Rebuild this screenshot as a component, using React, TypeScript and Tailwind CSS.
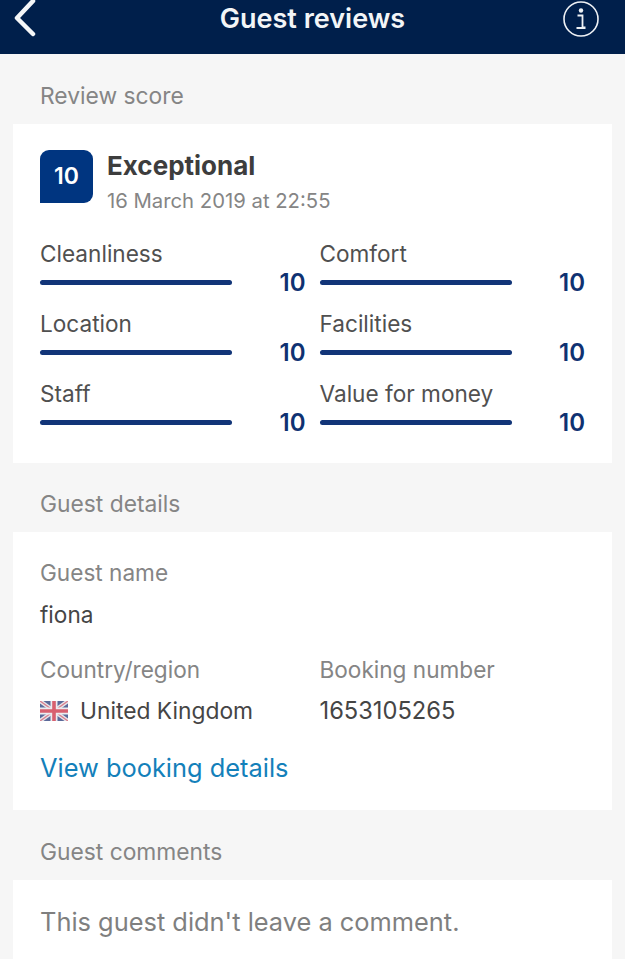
const scores = [
  { label: "Cleanliness", value: 10 },
  { label: "Comfort", value: 10 },
  { label: "Location", value: 10 },
  { label: "Facilities", value: 10 },
  { label: "Staff", value: 10 },
  { label: "Value for money", value: 10 },
];

function SectionLabel({ text }: { text: string }) {
  return <div className="h-[28px] mx-[40px] mb-[14px] text-[22.800px] leading-[28px] text-[#858585]">{text}</div>;
}

function UkFlag() {
  return (
    <svg width="28" height="20" viewBox="0 0 28 20" className="shrink-0">
      <rect width="28" height="20" fill="#5b6a9a" />
      <path d="M0 0L28 20M28 0L0 20" stroke="#e8e6ea" strokeWidth="4" />
      <path d="M0 0L28 20M28 0L0 20" stroke="#d9808f" strokeWidth="1.4" />
      <path d="M14 0V20M0 10H28" stroke="#ececf0" strokeWidth="7" />
      <path d="M14 0V20M0 10H28" stroke="#d8606f" strokeWidth="3.6" />
    </svg>
  );
}

export default function App() {
  return (
    <div className="h-[959px] w-[625px] overflow-hidden bg-[#f6f6f6] font-['Inter','Liberation_Sans',sans-serif] antialiased">
      <header className="grid h-[54px] grid-cols-[1fr_auto_1fr] items-start bg-[#001f4b]">
        <svg width="24" height="38" viewBox="0 0 24 38" fill="none" className="ml-[12px]">
          <path d="M21 1L5 18L21 34" stroke="#f4f6f8" strokeWidth="4.500" strokeLinecap="round" strokeLinejoin="round" />
        </svg>
        <h1 className="text-[27px] font-semibold leading-[38px] text-[#f3f5f7]">Guest reviews</h1>
        <svg width="36" height="36" viewBox="0 0 36 36" fill="none" className="mt-[1px] mr-[26px] justify-self-end">
          <circle cx="18" cy="18" r="17" stroke="#eef1f5" strokeWidth="1.600" />
          <circle cx="18" cy="9.500" r="2.200" fill="#eef1f5" />
          <path d="M14.500 14.500H19.500V26.500H22.500M13.500 27H22.500" stroke="#eef1f5" strokeWidth="1.800" />
        </svg>
      </header>

      <div className="pt-[28px]">
        <SectionLabel text="Review score" />
        <section className="mx-[13px] h-[339px] bg-white px-[27px] pt-[26px]">
          <div className="flex gap-[14px]">
            <div className="flex h-[53px] w-[53px] items-center justify-center rounded-tl-[9px] rounded-tr-[9px] rounded-br-[9px] bg-[#003580] text-[23px] font-semibold text-white">
              10
            </div>
            <div>
              <div className="text-[26px] font-bold leading-[32px] text-[#3d3d3d]">Exceptional</div>
              <div className="mt-[6px] text-[20.300px] leading-[26px] text-[#858585]">16 March 2019 at 22:55</div>
            </div>
          </div>
          <div className="mt-[26px] grid grid-cols-2 gap-x-[14px]">
            {scores.map((s) => (
              <div key={s.label} className="h-[70px]">
                <div className="text-[22.600px] leading-[28px] text-[#505050]">{s.label}</div>
                <div className="mt-[1px] flex items-center justify-between">
                  <div className="mb-[2px] h-[5px] w-[192px] rounded-full bg-[#123578]" />
                  <div className="text-[24px] font-semibold leading-[28px] text-[#0f3272]">{s.value}</div>
                </div>
              </div>
            ))}
          </div>
        </section>

        <div className="mt-[27px]">
          <SectionLabel text="Guest details" />
        </div>
        <section className="mx-[13px] h-[278px] bg-white px-[27px] pt-[27px]">
          <div className="text-[22.600px] leading-[28px] text-[#858585]">Guest name</div>
          <div className="mt-[14px] text-[22.600px] leading-[28px] text-[#454545]">fiona</div>
          <div className="mt-[27px] grid grid-cols-2 gap-x-[14px]">
            <div>
              <div className="text-[22.600px] leading-[28px] text-[#858585]">Country/region</div>
              <div className="mt-[13px] flex items-center gap-[12px] text-[22.800px] leading-[28px] text-[#454545]">
                <UkFlag />
                United Kingdom
              </div>
            </div>
            <div>
              <div className="text-[22.600px] leading-[28px] text-[#858585]">Booking number</div>
              <div className="mt-[13px] text-[23.700px] leading-[28px] text-[#454545]">1653105265</div>
            </div>
          </div>
          <div className="mt-[27px] text-[25.400px] leading-[32px] text-[#1380ba]">View booking details</div>
        </section>

        <div className="mt-[28px]">
          <SectionLabel text="Guest comments" />
        </div>
        <section className="mx-[13px] h-[100px] bg-white px-[27px] pt-[25px]">
          <div className="text-[25.400px] leading-[34px] text-[#7f7f7f]">This guest didn't leave a comment.</div>
        </section>
      </div>
    </div>
  );
}
